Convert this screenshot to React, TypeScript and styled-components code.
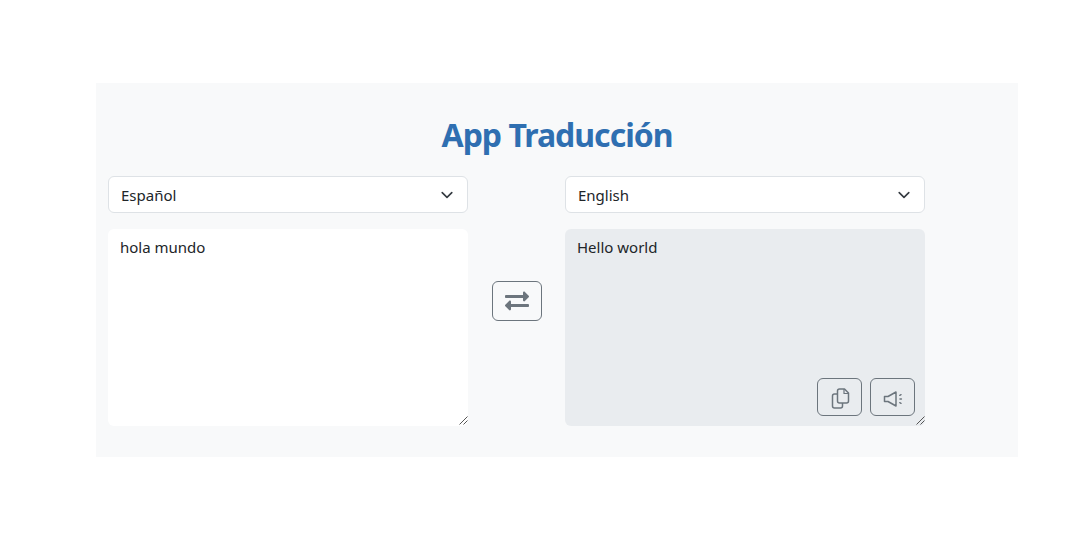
import React from "react";
import styled, { createGlobalStyle } from "styled-components";
import { FaExchangeAlt } from "react-icons/fa";

const GlobalStyle = createGlobalStyle`
  * { box-sizing: border-box; }
  body {
    margin: 0;
    background: #fff;
    font-family: "Noto Sans", "Open Sans", sans-serif;
    color: #212529;
  }
`;

const Page = styled.div`
  padding: 83px 62px 0 96px;
`;

const Panel = styled.main`
  height: 374px;
  background: #f8f9fa;
  padding: 31px 12px 0;
`;

const Title = styled.h1`
  margin: 0 0 21px;
  height: 41px;
  font-size: 32px;
  line-height: 41px;
  font-weight: 700;
  letter-spacing: -1px;
  text-align: center;
  color: #2f6fb1;
`;

const Columns = styled.div`
  display: grid;
  grid-template-columns: 360px 97px 360px;
  grid-template-rows: 37px 197px;
  row-gap: 16px;
`;

const SelectBox = styled.div<{ $col: number }>`
  grid-column: ${(p) => p.$col};
  grid-row: 1;
  display: flex;
  align-items: center;
  justify-content: space-between;
  padding: 0 12px;
  background: #fff;
  border: 1px solid #dee2e6;
  border-radius: 6px;
  font-size: 15px;
`;

const TextBox = styled.div<{ $col: number; $readOnly?: boolean }>`
  grid-column: ${(p) => p.$col};
  grid-row: 2;
  position: relative;
  padding: 6px 12px;
  background: ${(p) => (p.$readOnly ? "#e9ecef" : "#fff")};
  border-radius: 6px;
  font-size: 15px;
  line-height: 24px;
`;

const Middle = styled.div`
  grid-column: 2;
  grid-row: 1 / 3;
  display: flex;
  align-items: center;
  justify-content: center;
`;

const OutlineButton = styled.button<{ $w: number; $h: number }>`
  display: flex;
  align-items: center;
  justify-content: center;
  width: ${(p) => p.$w}px;
  height: ${(p) => p.$h}px;
  padding: 0;
  background: transparent;
  border: 1px solid #6c757d;
  border-radius: 6px;
  color: #6c757d;
`;

const Actions = styled.div`
  position: absolute;
  right: 10px;
  bottom: 10px;
  display: flex;
  gap: 8px;
`;

const Grip = styled.svg`
  position: absolute;
  right: 0;
  bottom: 1px;
`;

const ResizeGrip = () => (
  <Grip width="9" height="9" viewBox="0 0 9 9">
    <path d="M0.5 8.5L8.5 0.5M4.5 8.5L8.5 4.5" stroke="#555" strokeWidth="1" />
  </Grip>
);

const Chevron = () => (
  <svg width="16" height="16" viewBox="0 0 16 16">
    <path d="M2 5l6 6 6-6" fill="none" stroke="#343a40" strokeWidth="2" strokeLinecap="round" strokeLinejoin="round" transform="translate(1.6 1.6) scale(.8)" />
  </svg>
);

const CopyIcon = () => (
  <svg width="24" height="24" viewBox="0 0 24 24" fill="none" stroke="currentColor" strokeWidth="1.5" strokeLinejoin="round">
    <path d="M9.5 9H6.5a2 2 0 0 0-2 2v10a2 2 0 0 0 2 2h6a2 2 0 0 0 2-2v-3" />
    <path d="M9.5 6a2 2 0 0 1 2-2h5l4 4v8a2 2 0 0 1-2 2h-7a2 2 0 0 1-2-2z" />
    <path d="M16 4v4.5h4.5" strokeWidth="1.2" />
  </svg>
);

const SpeakerIcon = () => (
  <svg width="24" height="24" viewBox="0 0 24 24" fill="none" stroke="currentColor" strokeWidth="1.5">
    <path d="M3.5 11.5H7L15 7v14l-8-4.5H3.5z" strokeLinejoin="round" />
    <path d="M18.8 10.3l1.2-.6M19 14h1.4M18.8 17.7l1.2.6" strokeLinecap="round" />
  </svg>
);

export default function App() {
  return (
    <Page>
      <GlobalStyle />
      <Panel>
        <Title>App Traducción</Title>
        <Columns>
          <SelectBox $col={1}>Español<Chevron /></SelectBox>
          <SelectBox $col={3}>English<Chevron /></SelectBox>
          <TextBox $col={1}>hola mundo<ResizeGrip /></TextBox>
          <Middle>
            <OutlineButton $w={50} $h={40}><FaExchangeAlt size={24} /></OutlineButton>
          </Middle>
          <TextBox $col={3} $readOnly>
            Hello world
            <ResizeGrip />
            <Actions>
              <OutlineButton $w={45} $h={38}><CopyIcon /></OutlineButton>
              <OutlineButton $w={45} $h={38}><SpeakerIcon /></OutlineButton>
            </Actions>
          </TextBox>
        </Columns>
      </Panel>
    </Page>
  );
}
